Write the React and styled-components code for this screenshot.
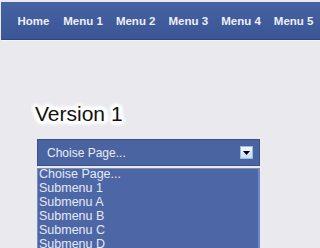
import React from "react";
import styled, { createGlobalStyle } from "styled-components";

const Global = createGlobalStyle`
  html, body { margin: 0; padding: 0; background: #e9e9ee; }
  body { width: 320px; height: 248px; overflow: hidden; font-family: "Liberation Sans", Arial, sans-serif; }
`;

const Page = styled.div`
  width: 320px;
  height: 248px;
  padding-top: 2px;
  box-sizing: border-box;
  overflow: hidden;
`;

const Nav = styled.nav`
  display: flex;
  align-items: center;
  margin-left: 1px;
  height: 37px;
  padding-left: 9px;
  background: linear-gradient(#4562a3, #3b5697);
  border-bottom: 1px solid #2f4680;
  box-shadow: 0 1px 0 #f6f6f8;
`;

const NavItem = styled.a`
  font-family: "Liberation Sans", Arial, sans-serif;
  font-weight: bold;
  font-size: 11.5px;
  color: #eef0f6;
  width: ${(p) => p.w}px;
  text-align: center;
  box-sizing: border-box;
  white-space: nowrap;
`;

const Content = styled.div`
  padding: 62px 0 0 35px;
`;

const Title = styled.h2`
  margin: 0;
  font-family: "Liberation Sans", Arial, sans-serif;
  font-weight: normal;
  font-size: 21px;
  line-height: 24px;
  color: #111;
  text-shadow:
    3px 0 2px #ffffff, -3px 0 2px #ffffff, 0 3px 2px #ffffff, 0 -3px 2px #ffffff,
    2px 2px 2px #ffffff, -2px -2px 2px #ffffff, 2px -2px 2px #ffffff, -2px 2px 2px #ffffff,
    4px 0 3px #ffffff, -4px 0 3px #ffffff, 0 4px 3px #ffffff, 0 -4px 3px #ffffff,
    3px 3px 3px #ffffff, -3px -3px 3px #ffffff, 3px -3px 3px #ffffff, -3px 3px 3px #ffffff;
`;

const SelectBox = styled.div`
  margin: 13px 0 0 2px;
  width: 223px;
  height: 27px;
  box-sizing: border-box;
  display: flex;
  align-items: center;
  justify-content: space-between;
  padding: 0 6px 0 9px;
  background: #4a63a1;
  border: 1px solid #3c5290;
  color: #e8ecf6;
  font-family: "Liberation Sans", Tahoma, sans-serif;
  font-size: 12px;
`;

const ArrowBtn = styled.span`
  width: 13px;
  height: 13px;
  display: flex;
  align-items: center;
  justify-content: center;
  background: linear-gradient(#f4f8ff, #c6dcf6);
  border: 1px solid #9fb8de;
  box-sizing: border-box;
`;

const List = styled.ul`
  list-style: none;
  margin: 2px 0 0 2px;
  padding: 0 0 0 1px;
  width: 223px;
  box-sizing: border-box;
  background: #4d66a5;
  border-left: 1px solid #7e8db8;
  border-right: 2px solid #6f88c8;
  border-top: 1px solid #7e8db8;
  height: 90px;
`;

const ListItem = styled.li`
  font-family: "Liberation Sans", Tahoma, sans-serif;
  font-size: 12.5px;
  line-height: 11px;
  height: 14px;
  color: #e6eaf6;
  white-space: nowrap;
`;

const menus = [
  ["Home", 47],
  ["Menu 1", 53],
  ["Menu 2", 53],
  ["Menu 3", 53],
  ["Menu 4", 53],
  ["Menu 5", 53],
];

const items = ["Choise Page...", "Submenu 1", "Submenu A", "Submenu B", "Submenu C", "Submenu D"];

export default function App() {
  return (
    <Page>
      <Global />
      <Nav>
        {menus.map(([m, w]) => (
          <NavItem key={m} w={w}>{m}</NavItem>
        ))}
      </Nav>
      <Content>
        <Title>Version 1</Title>
        <SelectBox>
          <span>Choise Page...</span>
          <ArrowBtn>
            <svg width="7" height="4" viewBox="0 0 7 4">
              <path d="M0 0 H7 L3.5 4 Z" fill="#000" />
            </svg>
          </ArrowBtn>
        </SelectBox>
        <List>
          {items.map((t) => (
            <ListItem key={t}>{t}</ListItem>
          ))}
        </List>
      </Content>
    </Page>
  );
}
